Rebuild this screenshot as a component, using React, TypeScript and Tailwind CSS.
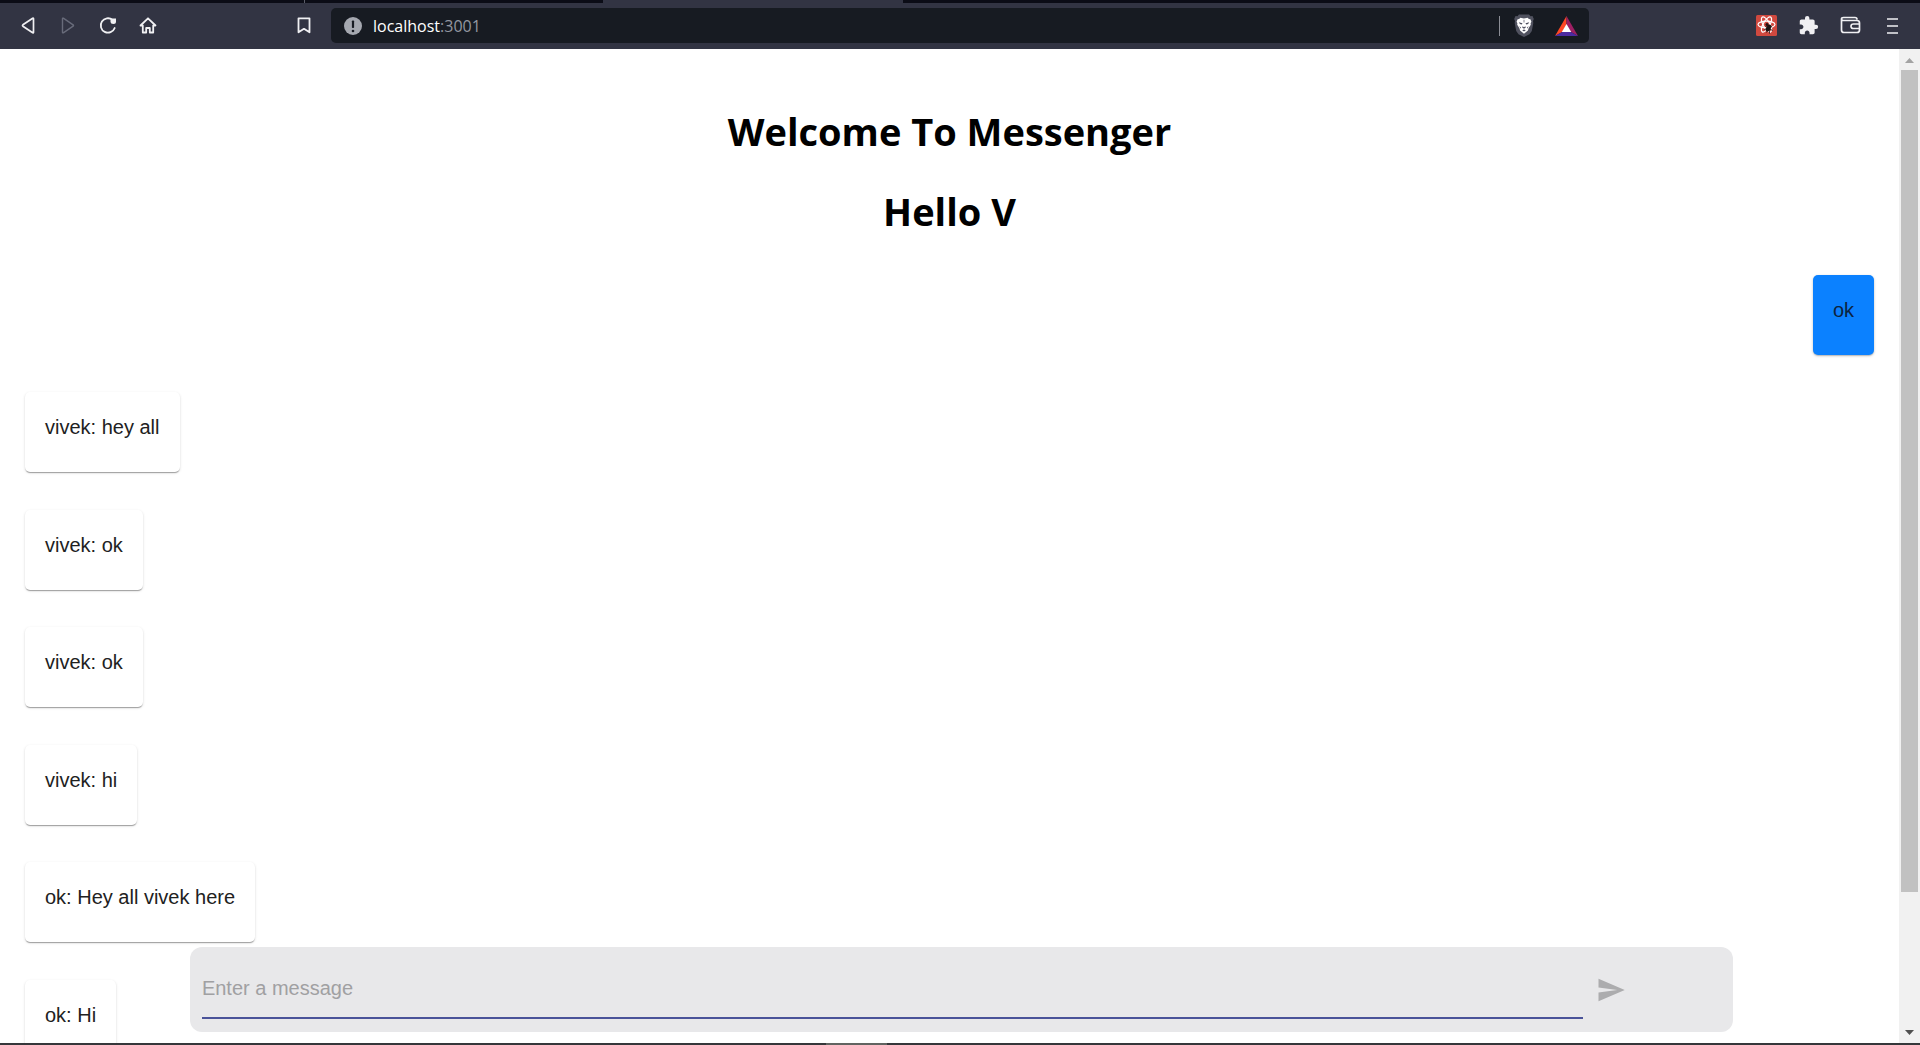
import { useState } from "react";
import type { ReactNode } from "react";
import { MdExtension, MdSend } from "react-icons/md";

type Message = { author?: string; text: string };

const messages: Message[] = [
  { text: "ok" },
  { author: "vivek", text: "hey all" },
  { author: "vivek", text: "ok" },
  { author: "vivek", text: "ok" },
  { author: "vivek", text: "hi" },
  { author: "ok", text: "Hey all vivek here" },
  { author: "ok", text: "Hi" },
];

function ToolButton({ label, disabled, children }: { label: string; disabled?: boolean; children: ReactNode }) {
  return (
    <button
      type="button"
      aria-label={label}
      disabled={disabled}
      className="flex size-5 shrink-0 items-center justify-center text-[#f0f0f3] disabled:text-[#686b7a]"
    >
      {children}
    </button>
  );
}

function BackIcon() {
  return (
    <svg className="size-5" viewBox="0 0 20 20" fill="none" stroke="currentColor" strokeWidth="1.7" strokeLinejoin="round">
      <path d="M15.500 2.700v13.600q0 .8-.8.5L4.900 10.200q-.8-.7 0-1.400l9.800-6.600q.8-.3.8.5z" />
    </svg>
  );
}

function ForwardIcon() {
  return (
    <svg className="size-5" viewBox="0 0 20 20" fill="none" stroke="currentColor" strokeWidth="1.4" strokeLinejoin="round">
      <path d="M4.500 2.700v13.600q0 .8.8.5l9.800-6.600q.8-.7 0-1.400L5.300 2.200q-.8-.3-.8.5z" />
    </svg>
  );
}

function ReloadIcon() {
  return (
    <svg className="size-5" viewBox="0 0 20 20" fill="none" stroke="currentColor" strokeWidth="1.8" strokeLinecap="round">
      <path d="M14.500 3.900A7.200 7.200 0 1 0 16.700 12" />
      <path d="M12.500 2.500h5.500v3q0 2.500-2.500 2.500-3 0-3-2.500z" fill="currentColor" stroke="none" />
    </svg>
  );
}

function HomeIcon() {
  return (
    <svg className="size-5" viewBox="0 0 20 20" fill="none" stroke="currentColor" strokeWidth="1.8" strokeLinejoin="round" strokeLinecap="round">
      <path d="M2.500 9.500 10 2.300l7.500 7.200h-2.300v7h-3.400V12H8.200v4.500H4.800v-7z" />
    </svg>
  );
}

function BookmarkIcon() {
  return (
    <svg className="size-5" viewBox="0 0 20 20" fill="none" stroke="currentColor" strokeWidth="1.8" strokeLinejoin="round">
      <path d="M4.500 2.300h11v14L10 12.800l-5.500 3.500z" />
    </svg>
  );
}

function InfoIcon() {
  return (
    <svg className="size-[18px] shrink-0" viewBox="0 0 18 18">
      <circle cx="9" cy="9" r="9" fill="#a5a8b0" />
      <rect x="7.900" y="3.500" width="2.200" height="7.500" rx=".8" fill="#171b22" />
      <circle cx="9" cy="14" r="1.300" fill="#171b22" />
    </svg>
  );
}

function LionIcon() {
  return (
    <svg className="h-[23px] w-5 shrink-0" viewBox="0 0 20 23">
      <path d="M5 .5h10l1.500 1.700 2-.2 1.300 3-.8 2 .3 2-1.500 8-2.300 3.300-5.500 2.700-5.500-2.700L2.200 17 .7 9 1 7 .2 5l1.300-3 2 .2z" fill="#50525f" />
      <g transform="translate(1.600 1)">
        <path d="M4.800 2.800 8.400 3.500l3.600-.7 1.300 1.300 1.500.2 1 2.500-.8 1.500.2 1.500-2.100 3.200-.8 2.500-3.900 3.300-3.900-3.300-.8-2.500-2.100-3.200.2-1.500-.8-1.500 1-2.500 1.500-.2z" fill="#fff" />
        <path d="m3.200 7.300 3.700.9-.8 1.300-1.800-.5zM13.600 7.300l-3.700.9.8 1.300 1.800-.5zM7 11.200l1.400 1.100 1.400-1.100.4 1.300-1.800 1.300-1.800-1.300zM6.600 15.300l1.800-.8 1.800.8-1.800 1.200zM3.800 11l1 2.500.7-.8zM13 11l-1 2.500-.7-.8z" fill="#4b4d5c" />
        <path d="M8.400 4.800v2.700" stroke="#4b4d5c" strokeWidth=".7" />
      </g>
    </svg>
  );
}

function TriangleIcon() {
  return (
    <svg className="h-5 w-[23px] shrink-0" viewBox="0 0 23 20">
      <path d="M11.500 0 0 20l7.500-4.300 4-7z" fill="#ff4724" />
      <path d="M11.500 0 23 20l-7.500-4.300-4-7z" fill="#9e1f63" />
      <path d="M0 20h23l-7.500-4.300h-8z" fill="#4c2ba0" />
      <path d="m11.500 8 4.700 7.900H6.800z" fill="#fff" />
    </svg>
  );
}

function DevtoolsIcon() {
  return (
    <svg className="size-[21px] shrink-0" viewBox="0 0 21 21" fill="none">
      <rect width="21" height="21" rx="1.500" fill="#d0493f" />
      <g stroke="#fff" strokeWidth="1.200">
        <ellipse cx="10.500" cy="9.500" rx="8.500" ry="3.300" />
        <ellipse cx="10.500" cy="9.500" rx="8.500" ry="3.300" transform="rotate(60 10.500 9.500)" />
        <ellipse cx="10.500" cy="9.500" rx="8.500" ry="3.300" transform="rotate(120 10.500 9.500)" />
      </g>
      <ellipse cx="12.500" cy="13" rx="2.200" ry="3.800" fill="#1d1413" transform="rotate(30 12.500 13)" />
      <circle cx="11" cy="9.500" r="1.500" fill="#1d1413" />
      <path d="m9.500 11.500 7 4M8.500 14.500l7.500-3M10.500 17.500l4-6M13.500 18.500l-.5-5" stroke="#1d1413" strokeWidth=".9" />
    </svg>
  );
}

function WalletIcon() {
  return (
    <svg className="size-[21px] shrink-0" viewBox="0 0 21 21" fill="none" stroke="currentColor" strokeWidth="1.7" strokeLinejoin="round">
      <path d="M1.500 4.500V15q0 2.500 2.500 2.500h13q2.500 0 2.500-2.500V8q0-2.500-2.500-2.500H3.500Q1.500 5.500 1.500 4t2-1.500H15q2 0 2 2" />
      <path d="M19.500 9h-6Q11 9 11 11.300t2.500 2.200h6" />
    </svg>
  );
}

function MenuIcon() {
  return (
    <svg className="h-4 w-[11px] shrink-0" viewBox="0 0 11 16" stroke="currentColor" strokeWidth="1.5">
      <path d="M0 1h11M0 8h11M0 15h11" />
    </svg>
  );
}

function BrowserBar() {
  return (
    <header className="shrink-0 bg-[#323443]">
      <div className="flex h-[3px]">
        <div className="w-[305px] border-r border-[#5a5c68] bg-[#0b0c16]" />
        <div className="w-[298px] bg-[#0b0c16]" />
        <div className="w-[300px]" />
        <div className="flex-1 bg-[#0b0c16]" />
      </div>
      <div className="flex items-center pt-[5px] pr-[18px] pb-[6px] pl-[18px]">
        <nav aria-label="Browser" className="flex w-[313px] shrink-0 items-center gap-5">
          <ToolButton label="Back"><BackIcon /></ToolButton>
          <ToolButton label="Forward" disabled><ForwardIcon /></ToolButton>
          <ToolButton label="Reload"><ReloadIcon /></ToolButton>
          <ToolButton label="Home"><HomeIcon /></ToolButton>
          <div className="mr-[17px] ml-auto flex">
            <ToolButton label="Bookmark"><BookmarkIcon /></ToolButton>
          </div>
        </nav>
        <div className="flex h-[35px] flex-1 items-center rounded-[5px] bg-[#171b22] pr-[13px] pl-[13px]">
          <InfoIcon />
          <button type="button" className="ml-[11px] flex-1 cursor-text text-left font-['Open_Sans',sans-serif] text-base leading-5 text-[#9397a0]">
            <span className="text-white">localhost</span>:3001
          </button>
          <div className="mr-[14px] h-5 w-px bg-[#8b8d95]" />
          <ToolButton label="Shields"><LionIcon /></ToolButton>
          <div className="ml-[22px] flex">
            <ToolButton label="Rewards"><TriangleIcon /></ToolButton>
          </div>
        </div>
        <div className="flex w-[313px] shrink-0 items-center justify-end gap-[22px]">
          <ToolButton label="React Developer Tools"><DevtoolsIcon /></ToolButton>
          <ToolButton label="Extensions"><MdExtension className="size-[21px] shrink-0" /></ToolButton>
          <ToolButton label="Wallet"><WalletIcon /></ToolButton>
          <ToolButton label="Menu"><MenuIcon /></ToolButton>
        </div>
      </div>
    </header>
  );
}

function MessageCard({ message }: { message: Message }) {
  const mine = !message.author;
  return (
    <li className="flex odd:mb-[37px] even:mb-[38px]">
      <p
        className={
          mine
            ? "ml-auto h-20 rounded-[5px] bg-[#0b81ff] px-5 pt-5 text-xl leading-[30px] text-[#0c2340] shadow-[0_1px_3px_rgba(0,0,0,0.2),0_1px_1px_rgba(0,0,0,0.14)]"
            : "h-20 rounded-[5px] bg-white px-5 pt-5 text-xl leading-[30px] text-[#212121] shadow-[0_1px_3px_rgba(0,0,0,0.12),0_1px_1px_rgba(0,0,0,0.14),0_2px_1px_-1px_rgba(0,0,0,0.2)]"
        }
      >
        {mine ? message.text : `${message.author}: ${message.text}`}
      </p>
    </li>
  );
}

function Composer() {
  const [draft, setDraft] = useState("");
  return (
    <form
      onSubmit={(event) => event.preventDefault()}
      className="absolute bottom-[11px] left-[10%] box-content flex w-[80%] items-center rounded-xl bg-[#e8e8ea] px-3"
    >
      <input
        aria-label="Enter a message"
        placeholder="Enter a message"
        value={draft}
        onChange={(event) => setDraft(event.target.value)}
        className="mt-[22px] mb-[13px] h-[50px] min-w-0 flex-1 border-b-2 border-[#4a5399] pb-2.5 text-xl outline-none placeholder:text-[#a0a0a2]"
      />
      <div className="flex w-[138px] pl-[13px]">
        <button type="submit" aria-label="Send message" disabled={!draft} className="text-[#acacae]">
          <MdSend className="size-[30px]" />
        </button>
      </div>
    </form>
  );
}

function Scrollbar() {
  return (
    <div aria-hidden="true" className="flex w-[21px] shrink-0 flex-col items-center bg-[#f1f1f1]">
      <svg className="h-[21px] w-[9px] shrink-0" viewBox="0 0 9 21"><path d="m0 14 4.500-5L9 14z" fill="#a3a3a3" /></svg>
      <div className="w-[17px] flex-[822] bg-[#c1c1c1]" />
      <div className="flex-[130]" />
      <svg className="h-[21px] w-[9px] shrink-0" viewBox="0 0 9 21"><path d="m0 8 4.500 5L9 8z" fill="#505050" /></svg>
    </div>
  );
}

export default function App() {
  return (
    <div className="flex h-screen flex-col bg-white font-['Liberation_Sans',Arial,sans-serif]">
      <BrowserBar />
      <div className="flex min-h-0 flex-1">
        <main className="relative min-w-0 flex-1 overflow-hidden">
          <div className="flex flex-col gap-[26px] pt-[55px] text-center font-['Open_Sans',sans-serif] text-[38px] leading-[54px] font-bold text-black">
            <h1>Welcome To Messenger</h1>
            <h2>Hello V</h2>
          </div>
          <ul className="mt-[37px] px-[25px]">
            {messages.map((message, index) => (
              <MessageCard key={index} message={message} />
            ))}
          </ul>
          <Composer />
        </main>
        <Scrollbar />
      </div>
      <footer className="flex h-0.5 shrink-0 bg-[#35373a]">
        <div className="ml-[43%] w-[61px] bg-[#616461]" />
      </footer>
    </div>
  );
}
